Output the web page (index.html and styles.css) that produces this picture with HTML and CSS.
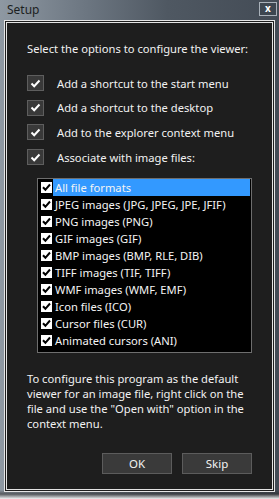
FILE: index.html
```html
<!DOCTYPE html>
<html>
<head>
<meta charset="utf-8">
<link rel="stylesheet" href="styles.css">
</head>
<body>
<div class="window">
  <div class="titlebar">
    <span class="title">Setup</span>
    <span class="close">x</span>
  </div>
  <div class="panel">
    <p class="intro">Select the options to configure the viewer:</p>
    <ul class="options">
      <li class="option"><span class="cb"><svg width="11" height="9" viewBox="0 0 11 9"><path d="M1.5 4.5 L4.2 7.2 L9.5 1.5" fill="none" stroke="#fff" stroke-width="2"/></svg></span><span>Add a shortcut to the start menu</span></li>
      <li class="option"><span class="cb"><svg width="11" height="9" viewBox="0 0 11 9"><path d="M1.5 4.5 L4.2 7.2 L9.5 1.5" fill="none" stroke="#fff" stroke-width="2"/></svg></span><span>Add a shortcut to the desktop</span></li>
      <li class="option"><span class="cb"><svg width="11" height="9" viewBox="0 0 11 9"><path d="M1.5 4.5 L4.2 7.2 L9.5 1.5" fill="none" stroke="#fff" stroke-width="2"/></svg></span><span>Add to the explorer context menu</span></li>
      <li class="option"><span class="cb"><svg width="11" height="9" viewBox="0 0 11 9"><path d="M1.5 4.5 L4.2 7.2 L9.5 1.5" fill="none" stroke="#fff" stroke-width="2"/></svg></span><span>Associate with image files:</span></li>
    </ul>
    <div class="list">
      <div class="item selected"><span class="lcb"><svg width="9" height="9" viewBox="0 0 9 9"><path d="M1 4.2 L3.4 6.8 L8 1.5" fill="none" stroke="#000" stroke-width="2"/></svg></span><span class="label">All file formats</span></div>
      <div class="item"><span class="lcb"><svg width="9" height="9" viewBox="0 0 9 9"><path d="M1 4.2 L3.4 6.8 L8 1.5" fill="none" stroke="#000" stroke-width="2"/></svg></span><span class="label">JPEG images (JPG, JPEG, JPE, JFIF)</span></div>
      <div class="item"><span class="lcb"><svg width="9" height="9" viewBox="0 0 9 9"><path d="M1 4.2 L3.4 6.8 L8 1.5" fill="none" stroke="#000" stroke-width="2"/></svg></span><span class="label">PNG images (PNG)</span></div>
      <div class="item"><span class="lcb"><svg width="9" height="9" viewBox="0 0 9 9"><path d="M1 4.2 L3.4 6.8 L8 1.5" fill="none" stroke="#000" stroke-width="2"/></svg></span><span class="label">GIF images (GIF)</span></div>
      <div class="item"><span class="lcb"><svg width="9" height="9" viewBox="0 0 9 9"><path d="M1 4.2 L3.4 6.8 L8 1.5" fill="none" stroke="#000" stroke-width="2"/></svg></span><span class="label">BMP images (BMP, RLE, DIB)</span></div>
      <div class="item"><span class="lcb"><svg width="9" height="9" viewBox="0 0 9 9"><path d="M1 4.2 L3.4 6.8 L8 1.5" fill="none" stroke="#000" stroke-width="2"/></svg></span><span class="label">TIFF images (TIF, TIFF)</span></div>
      <div class="item"><span class="lcb"><svg width="9" height="9" viewBox="0 0 9 9"><path d="M1 4.2 L3.4 6.8 L8 1.5" fill="none" stroke="#000" stroke-width="2"/></svg></span><span class="label">WMF images (WMF, EMF)</span></div>
      <div class="item"><span class="lcb"><svg width="9" height="9" viewBox="0 0 9 9"><path d="M1 4.2 L3.4 6.8 L8 1.5" fill="none" stroke="#000" stroke-width="2"/></svg></span><span class="label">Icon files (ICO)</span></div>
      <div class="item"><span class="lcb"><svg width="9" height="9" viewBox="0 0 9 9"><path d="M1 4.2 L3.4 6.8 L8 1.5" fill="none" stroke="#000" stroke-width="2"/></svg></span><span class="label">Cursor files (CUR)</span></div>
      <div class="item"><span class="lcb"><svg width="9" height="9" viewBox="0 0 9 9"><path d="M1 4.2 L3.4 6.8 L8 1.5" fill="none" stroke="#000" stroke-width="2"/></svg></span><span class="label">Animated cursors (ANI)</span></div>
    </div>
    <p class="note">To configure this program as the default viewer for an image file, right click on the file and use the "Open with" option in the context menu.</p>
    <div class="buttons">
      <button class="btn">OK</button>
      <button class="btn">Skip</button>
    </div>
  </div>
</div>
</body>
</html>
```
FILE: styles.css
```css
html, body {
  margin: 0;
  padding: 0;
}
body {
  width: 279px;
  height: 499px;
  overflow: hidden;
  font-family: "Noto Sans", "Open Sans", sans-serif;
  font-size: 11.2px;
  background: #fff;
}
.window {
  box-sizing: border-box;
  height: 499px;
  padding: 0 4px 7px 4px;
  display: flex;
  flex-direction: column;
  background:
    linear-gradient(to bottom, rgba(0,0,0,0) 0, rgba(0,0,0,0) 490px, rgba(40,40,40,0.55) 494px, rgba(255,255,255,0.9) 499px),
    linear-gradient(to right, #8e98a2 0, #6d7782 30%, #4f5862 60%, #434b55 100%);
}
.titlebar {
  height: 20px;
  flex: none;
  display: flex;
  align-items: center;
  justify-content: space-between;
}
.title {
  padding-left: 3px;
  color: #1c1f22;
  font-size: 12px;
  line-height: 15px;
  margin-top: -1px;
}
.close {
  box-sizing: border-box;
  width: 18px;
  height: 14px;
  margin-right: -2px;
  margin-top: -3px;
  border: 1px solid #a9b1b9;
  background: #3d4650;
  color: #fff;
  font-weight: bold;
  font-size: 10px;
  line-height: 11px;
  text-align: center;
}
.panel {
  flex: 1;
  border: 3px double #e4e4e4;
  background: #1e1e1e;
  padding: 18px 20px 0 20px;
  color: #f2f2f2;
  display: flex;
  flex-direction: column;
}
.intro {
  margin: 0;
  line-height: 15px;
  white-space: nowrap;
}
.options {
  list-style: none;
  margin: 19px 0 0 0;
  padding: 0;
  display: flex;
  flex-direction: column;
  gap: 8.7px;
}
.option {
  display: flex;
  align-items: center;
  gap: 13px;
  height: 16px;
  line-height: 15px;
  white-space: nowrap;
}
.cb {
  box-sizing: border-box;
  width: 17px;
  height: 16px;
  border: 1px solid #5e5e5e;
  background: #393939;
  display: flex;
  align-items: center;
  justify-content: center;
  flex: none;
}
.list {
  box-sizing: border-box;
  margin: 13px 0 0 10px;
  height: 175px;
  border: 1px solid #6e6e6e;
  background: #000;
  padding-top: 0;
}
.item {
  height: 17px;
  display: flex;
  align-items: center;
  padding-left: 3px;
  padding-right: 1px;
}
.lcb {
  box-sizing: border-box;
  width: 11px;
  height: 11px;
  background: #fff;
  display: flex;
  align-items: center;
  justify-content: center;
  flex: none;
}
.label {
  flex: 1;
  height: 17px;
  line-height: 17px;
  padding-left: 2px;
  margin-left: 1px;
  color: #f4f4f4;
  white-space: nowrap;
}
.selected .label {
  background: #3399ff;
}
.note {
  margin: 17.5px 0 0 0;
  line-height: 15px;
}
.buttons {
  margin-top: 22.5px;
  display: flex;
  justify-content: flex-end;
  gap: 10px;
}
.btn {
  box-sizing: border-box;
  width: 70px;
  height: 21px;
  border: 1px solid #5c5c5c;
  background: #3a3a3a;
  color: #f2f2f2;
  font-family: "Noto Sans", "Open Sans", sans-serif;
  font-size: 11.5px;
  padding: 0;
}
```
